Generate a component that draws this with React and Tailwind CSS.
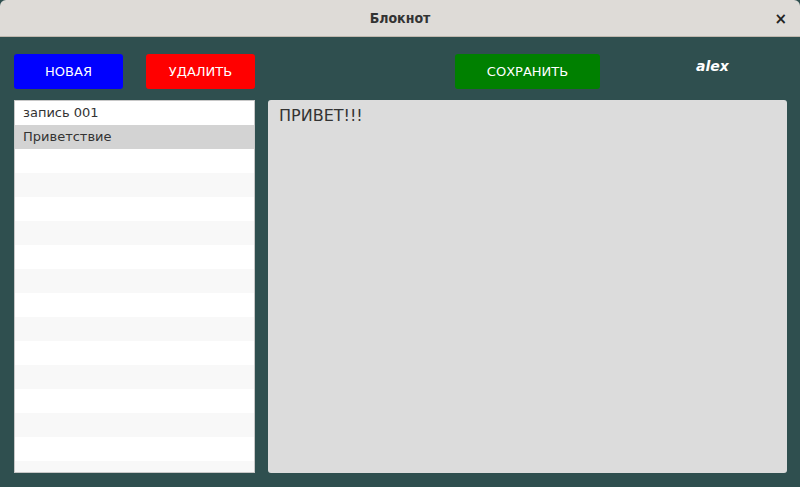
import React from 'react';

const notes = ['запись 001', 'Приветствие'];

export default function App() {
    const rows = Array.from({ length: 16 }, (_, i) => notes[i] ?? '');
    const selected = 1;

    return (
        <div className="w-[800px] h-[487px] flex flex-col bg-[#2f4f4f] overflow-hidden" style={{ fontFamily: '"DejaVu Sans", sans-serif' }}>
            {/* Window title bar */}
            <div className="h-[37px] shrink-0 relative flex items-center justify-center bg-[#dedbd7] border-b border-[#bfb8ae] rounded-t-[6px]">
                <span className="text-[14px] font-bold text-[#333]" style={{ fontFamily: '"DejaVu Sans Condensed", "DejaVu Sans", sans-serif' }}>Блокнот</span>
                <span className="absolute right-[13px] top-[8px] text-[15px] font-bold text-[#222]">×</span>
            </div>

            {/* Toolbar */}
            <div className="flex items-center h-[35px] mt-[17px] pl-[14px]">
                <button className="w-[109px] h-[35px] rounded-[3px] bg-[#0000ff] text-white text-[13px]">НОВАЯ</button>
                <button className="w-[109px] h-[35px] ml-[23px] rounded-[3px] bg-[#ff0000] text-white text-[13px]">УДАЛИТЬ</button>
                <button className="w-[145px] h-[35px] ml-[200px] rounded-[3px] bg-[#008000] text-white text-[13px]">СОХРАНИТЬ</button>
                <span className="ml-[96px] -mt-[11px] text-[14px] font-bold italic text-white">alex</span>
            </div>

            {/* Content */}
            <div className="flex mt-[11px] pl-[14px] gap-[13px]">
                <div className="w-[241px] h-[373px] bg-white border border-[#c8c8c8] overflow-hidden">
                    {rows.map((r, i) => (
                        <div
                            key={i}
                            className={`h-[24px] flex items-center pl-[8px] text-[13px] text-[#333] ${
                                i === selected ? 'bg-[#d3d3d3]' : i % 2 === 1 ? 'bg-[#f8f8f8]' : 'bg-white'
                            }`}
                        >
                            {r}
                        </div>
                    ))}
                </div>
                <div className="w-[519px] h-[373px] bg-[#dcdcdc] rounded-[3px] px-[11px] pt-[4px]">
                    <span className="text-[16px] text-[#333]">ПРИВЕТ!!!</span>
                </div>
            </div>
        </div>
    );
}
